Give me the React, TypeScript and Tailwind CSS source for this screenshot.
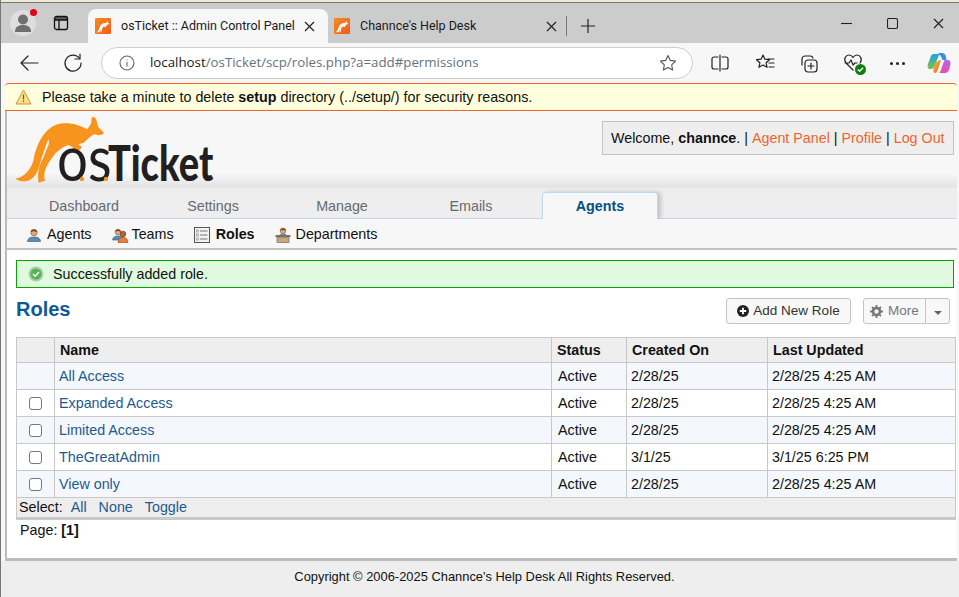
import React from "react";

const Favicon = () => (
  <svg width="16" height="16" viewBox="0 0 16 16" className="shrink-0">
    <defs>
      <linearGradient id="fav" x1="0" y1="0" x2="1" y2="1">
        <stop offset="0" stopColor="#f58d1e" />
        <stop offset="1" stopColor="#f0591f" />
      </linearGradient>
    </defs>
    <rect width="16" height="16" rx="1" fill="url(#fav)" />
    <path d="M1 14.500C3 14 4 11 5 8.500 6 6 8.500 4.500 11 5l1.500-2 .5 1.500 1.500 1.500-2 .5-2 2.500-2-.5-1.500 2.500-.5 3.500-1-.5.5-2.500-1.500 2.500z" fill="#fff" />
  </svg>
);

const X = ({ size = 11 }: { size?: number }) => (
  <svg width={size} height={size} viewBox="0 0 11 11" stroke="#222" strokeWidth="1.2" fill="none" className="shrink-0">
    <path d="M1 1l9 9M10 1l-9 9" />
  </svg>
);

const Kangaroo = () => (
  <svg width="110" height="80" viewBox="0 0 330 240" className="absolute left-[3px] top-0" fill="#f7941e">
    <path d="M15 203C40 200 60 180 70 150C80 90 110 45 150 38C180 33 210 42 232 55L243 38L245 20C250 15 258 18 260 30L265 48L282 65C280 72 268 75 255 70C245 72 232 85 222 95L205 100L216 108L206 120L180 119L190 110L176 102C160 106 145 120 135 128C120 150 100 170 103 203L108 208L86 215C82 190 85 165 100 140L112 110C118 100 118 90 115 85C105 110 92 150 85 175C75 200 60 215 30 210z" />
  </svg>
);

const Logo = () => (
  <div className="relative w-[230px] h-[77px] shrink-0">
    <Kangaroo />
    <svg width="250" height="90" viewBox="0 0 250 90" className="absolute left-0 top-0">
      <text transform="translate(50 70) scale(0.88 1)" fontFamily="Lato, sans-serif" fontWeight="400" fontSize="62" fill="#231f20">os</text>
      <text transform="translate(101 70) scale(0.775 1)" fontFamily="Lato, sans-serif" fontWeight="900" fontSize="49" fill="#231f20">Ticket</text>
      <circle cx="75" cy="68" r="2.2" fill="#f7941e" />
      <circle cx="99" cy="68" r="2.2" fill="#f7941e" />
    </svg>
  </div>
);

const Agent = () => (
  <svg width="16" height="16" viewBox="0 0 16 16" className="shrink-0">
    <path d="M1.500 14.500C2 11 4 10 8 10s6 1 6.500 4.500z" fill="#5b8db3" stroke="#35556e" strokeWidth=".6" />
    <circle cx="8" cy="5.500" r="3.200" fill="#e8a878" stroke="#7a4c2e" strokeWidth=".6" />
    <path d="M4.800 5C5 2 11 2 11.200 5 9 4 7 4 4.800 5z" fill="#6b3f1f" />
  </svg>
);

const Team = () => (
  <svg width="17" height="16" viewBox="0 0 17 16" className="shrink-0">
    <path d="M.5 13C1 10 3 9 6 9s5 1 5.500 4z" fill="#5b8db3" stroke="#35556e" strokeWidth=".6" />
    <circle cx="6" cy="5" r="2.800" fill="#e8a878" stroke="#7a4c2e" strokeWidth=".6" />
    <path d="M3.200 4.500C3.500 2 8.500 2 8.800 4.500 7 3.700 5 3.700 3.200 4.500z" fill="#6b3f1f" />
    <path d="M6 15.500C6.500 11.500 8 10.500 11 10.500s4.500 1 5 5z" fill="#ee7d3b" stroke="#8b4513" strokeWidth=".6" />
    <circle cx="11" cy="7" r="2.800" fill="#a5673f" stroke="#5c3317" strokeWidth=".6" />
  </svg>
);

const RoleIcon = () => (
  <svg width="16" height="16" viewBox="0 0 16 16" className="shrink-0">
    <rect x=".5" y=".5" width="15" height="15" fill="#f2f2f2" stroke="#555" />
    <rect x="2.500" y="3" width="2" height="2" fill="none" stroke="#999" strokeWidth=".7" />
    <rect x="2.500" y="7" width="2" height="2" fill="none" stroke="#999" strokeWidth=".7" />
    <rect x="2.500" y="11" width="2" height="2" fill="none" stroke="#999" strokeWidth=".7" />
    <path d="M6 4h7.500M6 8h7.500M6 12h7.500" stroke="#777" strokeWidth="1.200" />
  </svg>
);

const Dept = () => (
  <svg width="16" height="16" viewBox="0 0 16 16" className="shrink-0">
    <circle cx="8" cy="3.800" r="2.800" fill="#e8a878" stroke="#7a4c2e" strokeWidth=".6" />
    <path d="M5.200 3.500C5.500 1 10.500 1 10.800 3.500 9 2.700 7 2.700 5.200 3.500z" fill="#6b3f1f" />
    <path d="M4 8.500C4.500 7 6 6.700 8 6.700s3.500.3 4 1.800z" fill="#5b8db3" />
    <rect x=".5" y="8" width="15" height="2" fill="#777" />
    <rect x="2" y="10" width="12" height="5.500" fill="#c9a67c" stroke="#6b5a45" strokeWidth=".6" />
  </svg>
);

const ToolIcon = ({ children, className = "" }: { children: React.ReactNode; className?: string }) => (
  <svg width="22" height="22" viewBox="0 0 22 22" fill="none" stroke="#222" strokeWidth="1.200" strokeLinecap="round" strokeLinejoin="round" className={className}>
    {children}
  </svg>
);

const TabBar = () => (
  <div className="h-[40px] bg-[#cccccc] flex items-end shrink-0 relative">
    <div className="w-[87px] h-[40px] flex items-center shrink-0">
      <div className="relative ml-[9px] w-[26px] h-[26px] rounded-full bg-[#dedede] overflow-visible flex items-center justify-center shrink-0">
        <svg width="22" height="22" viewBox="0 0 22 22" fill="#6f6f6f">
          <circle cx="11" cy="7.500" r="5" />
          <path d="M3 20c0-5 3-7 8-7s8 2 8 7z" />
        </svg>
        <span className="absolute right-[-1px] top-[-1px] w-[7px] h-[7px] rounded-full bg-[#e2001a]"></span>
      </div>
      <svg width="16" height="16" viewBox="0 0 16 16" fill="none" stroke="#111" strokeWidth="1.300" className="ml-[17px]">
        <rect x="1.500" y="1.500" width="13" height="13" rx="2" />
        <path d="M1.500 5h13M6 5v9.500" />
        <path d="M2 2h12v3H2z" fill="#111" stroke="none" opacity=".6" />
      </svg>
    </div>
    <div className="w-[240px] h-[34px] bg-[#f7f7f7] rounded-t-[8px] flex items-center pl-[7px] pr-[13px] shrink-0">
      <Favicon />
      <span className="ml-[10px] text-[12.5px] text-[#1a1a1a] flex-1 whitespace-nowrap">osTicket :: Admin Control Panel</span>
      <X />
    </div>
    <div className="w-[238px] h-[34px] flex items-center pl-[6px] pr-[9px] shrink-0">
      <Favicon />
      <span className="ml-[10px] text-[12.5px] text-[#1a1a1a] flex-1 whitespace-nowrap">Channce's Help Desk</span>
      <X />
    </div>
    <div className="w-px h-[20px] bg-[#777] mb-[7px] shrink-0"></div>
    <div className="ml-[14px] mb-[10px] shrink-0">
      <svg width="14" height="14" viewBox="0 0 14 14" stroke="#222" strokeWidth="1.200"><path d="M7 0v14M0 7h14" /></svg>
    </div>
    <div className="ml-auto h-full flex items-center pr-[15px] gap-[35px]">
      <svg width="11" height="11" viewBox="0 0 11 11" stroke="#222" strokeWidth="1.100"><path d="M0 5.500h11" /></svg>
      <svg width="11" height="11" viewBox="0 0 11 11" stroke="#222" strokeWidth="1.100" fill="none"><rect x=".5" y=".5" width="10" height="10" rx="1.500" /></svg>
      <X />
    </div>
  </div>
);

const Toolbar = () => (
  <div className="h-[40px] bg-[#f7f7f7] flex items-center shrink-0 pl-[17px]">
    <ToolIcon>
      <path d="M20 11H3M10 4l-7 7 7 7" />
    </ToolIcon>
    <ToolIcon className="ml-[22px]">
      <path d="M17.500 6.500A8 8 0 1 0 19 11" />
      <path d="M18 2v5h-5" />
    </ToolIcon>
    <div className="ml-[17px] w-[592px] h-[32px] bg-white border border-[#cfcfcf] rounded-full flex items-center pl-[17px] pr-[15px]">
      <svg width="16" height="16" viewBox="0 0 16 16" fill="none" stroke="#666" strokeWidth="1.100" className="shrink-0">
        <circle cx="8" cy="8" r="7" />
        <path d="M8 7v4.500M8 4.500v1" />
      </svg>
      <span className="ml-[15px] text-[13.3px] whitespace-nowrap flex-1 text-[#66727f]">
        <span className="text-[#1a1a1a]">localhost</span>/osTicket/scp/roles.php?a=add#permissions
      </span>
      <svg width="18" height="18" viewBox="0 0 18 18" fill="none" stroke="#555" strokeWidth="1.100" strokeLinejoin="round" className="shrink-0">
        <path d="M9 1.500l2.300 4.900 5.200.7-3.800 3.700.9 5.300L9 13.500l-4.600 2.600.9-5.300L1.500 7.100l5.200-.7z" />
      </svg>
    </div>
    <div className="flex items-center ml-[16px]">
      <ToolIcon>
        <path d="M9 5H5a2 2 0 0 0-2 2v8a2 2 0 0 0 2 2h4M13 5h4a2 2 0 0 1 2 2v8a2 2 0 0 1-2 2h-4M11 3v16" />
      </ToolIcon>
      <ToolIcon className="ml-[23px]">
        <path d="M9 3l1.900 4.200 4.600.5-3.400 3.100 1 4.500L9 13l-4.100 2.300 1-4.500-3.400-3.100 4.600-.5zM14 7h6M15 11h5M15 15h5" />
      </ToolIcon>
      <ToolIcon className="ml-[21px]">
        <path d="M5 13V7a3 3 0 0 1 3-3h5a3 3 0 0 1 3 2" />
        <rect x="8" y="8" width="12" height="12" rx="3" />
        <path d="M14 11v6M11 14h6" />
      </ToolIcon>
      <div className="relative ml-[23px] w-[22px] h-[22px]">
        <ToolIcon>
          <path d="M11 18L4 11C1 7 4 3 7 3c2 0 3.200 1 4 2.500C12 4 13 3 15 3c3 0 6 4 3 8M3 11h4l2-3 2 5 2-2h2" />
        </ToolIcon>
        <span className="absolute right-[-2px] bottom-[-1px] w-[11px] h-[11px] rounded-full bg-[#107c10] flex items-center justify-center">
          <svg width="7" height="7" viewBox="0 0 8 8" fill="none" stroke="#fff" strokeWidth="1.500"><path d="M1 4l2 2 4-4" /></svg>
        </span>
      </div>
      <div className="ml-[24px] flex gap-[3px] w-[18px] justify-center">
        <span className="w-[3px] h-[3px] rounded-full bg-[#222]"></span>
        <span className="w-[3px] h-[3px] rounded-full bg-[#222]"></span>
        <span className="w-[3px] h-[3px] rounded-full bg-[#222]"></span>
      </div>
      <svg width="24" height="22" viewBox="0 0 24 22" className="ml-[21px]">
        <defs>
          <linearGradient id="co1" x1="0" y1="0" x2="0" y2="1"><stop offset="0" stopColor="#1ba4e8" /><stop offset="1" stopColor="#7fc241" /></linearGradient>
          <linearGradient id="co2" x1="0" y1="0" x2="0" y2="1"><stop offset="0" stopColor="#b169e8" /><stop offset="1" stopColor="#e84fa5" /></linearGradient>
          <linearGradient id="co3" x1="0" y1="0" x2="1" y2="1"><stop offset="0" stopColor="#f7c32e" /><stop offset="1" stopColor="#f0543c" /></linearGradient>
        </defs>
        <path d="M7 2h8l-3 1-4 10c-1 3-2 4-4 4H3C1 17 0 15 1 12L4 4c.5-1.300 1.500-2 3-2z" fill="url(#co1)" />
        <path d="M12 21h6c2 0 3-1 4-3l1.500-6c.5-3-1-4-3-4h-3l-3 8c-.5 2-1.500 5-2.500 5z" fill="url(#co2)" />
        <path d="M8 12c2-3 4-4 6-4l-3 9c-.5 2-1.500 4-3 4-1.500 0-2-2-1.500-4z" fill="url(#co3)" />
        <path d="M11 1h4c2 0 3.500 1 4 4l.5 3h-4c-1.500-4-3-6-4.500-7z" fill="#3d8ce8" />
      </svg>
    </div>
  </div>
);

const TABS = ["Dashboard", "Settings", "Manage", "Emails", "Agents"];

const MainNav = () => (
  <div className="h-[31px] bg-[#eeeeee] border-b border-[#c0d9ee] flex items-end pl-[19px] shrink-0">
    {TABS.map((t) =>
      t === "Agents" ? (
        <div key={t} className="w-[116px] h-[27px] mr-[13px] mb-[-1px] bg-[#f7f7f7] border border-b-0 border-[#c0d9ee] rounded-t-[4px] shadow-[3px_0_4px_rgba(0,0,0,0.18)] flex items-center justify-center font-bold text-[#0a4f86]">
          {t}
        </div>
      ) : (
        <div key={t} className="w-[116px] h-[27px] mr-[13px] pt-[4px] flex items-center justify-center text-[#666a70]">
          {t}
        </div>
      )
    )}
  </div>
);

const SubNav = () => (
  <div className="h-[31px] bg-[#f7f7f7] border-b-2 border-[#c2c2c2] flex items-center pl-[19px] pt-[2px] shrink-0 text-[#111]">
    <Agent />
    <span className="ml-[5px]">Agents</span>
    <span className="ml-[20px]"><Team /></span>
    <span className="ml-[3px]">Teams</span>
    <span className="ml-[20px]"><RoleIcon /></span>
    <span className="ml-[6px] font-bold">Roles</span>
    <span className="ml-[20px]"><Dept /></span>
    <span className="ml-[5px]">Departments</span>
  </div>
);

const ROWS = [
  { n: "All Access", c: "2/28/25", u: "2/28/25 4:25 AM", box: false },
  { n: "Expanded Access", c: "2/28/25", u: "2/28/25 4:25 AM", box: true },
  { n: "Limited Access", c: "2/28/25", u: "2/28/25 4:25 AM", box: true },
  { n: "TheGreatAdmin", c: "3/1/25", u: "3/1/25 6:25 PM", box: true },
  { n: "View only", c: "2/28/25", u: "2/28/25 4:25 AM", box: true },
];

const RolesTable = () => (
  <table className="w-[939px] table-fixed border-collapse text-[#111]">
    <colgroup>
      <col className="w-[38px]" />
      <col className="w-[497px]" />
      <col className="w-[75px]" />
      <col className="w-[141px]" />
      <col className="w-[188px]" />
    </colgroup>
    <thead>
      <tr className="h-[25px] bg-[#eeeeee] font-bold">
        <th className="border border-[#c8c8c8]"></th>
        <th className="border border-[#c8c8c8] text-left pl-[5px] font-bold">Name</th>
        <th className="border border-[#c8c8c8] text-left pl-[5px] font-bold">Status</th>
        <th className="border border-[#c8c8c8] text-left pl-[5px] font-bold">Created On</th>
        <th className="border border-[#c8c8c8] text-left pl-[5px] font-bold">Last Updated</th>
      </tr>
    </thead>
    <tbody>
      {ROWS.map((r, i) => (
        <tr key={r.n} className={i % 2 === 0 ? "h-[27px] bg-[#f4f7fc]" : "h-[27px] bg-white"}>
          <td className="border border-[#c8c8c8] text-center">
            {r.box && (
              <span className="inline-block w-[13px] h-[13px] border border-[#767676] rounded-[3px] bg-white align-middle"></span>
            )}
          </td>
          <td className="border border-[#c8c8c8] pl-[4px] text-[#1d5a8f]">{r.n}</td>
          <td className="border border-[#c8c8c8] pl-[6px]">Active</td>
          <td className="border border-[#c8c8c8] pl-[4px]">{r.c}</td>
          <td className="border border-[#c8c8c8] pl-[4px]">{r.u}</td>
        </tr>
      ))}
      <tr className="h-[21px] bg-[#eeeeee]">
        <td colSpan={5} className="border border-[#c8c8c8] border-b-[3px] pl-[2px]">
          Select:<span className="ml-[8px] text-[#1d5a8f]">All</span>
          <span className="ml-[12px] text-[#1d5a8f]">None</span>
          <span className="ml-[12px] text-[#1d5a8f]">Toggle</span>
        </td>
      </tr>
    </tbody>
  </table>
);

export default function App() {
  return (
    <div className="w-[959px] h-[597px] overflow-hidden flex flex-col bg-[#eeeeee] font-['Liberation_Sans',Arial,sans-serif] text-[14.3px] leading-none border-l border-[#777]">
      <div className="h-[3px] bg-[#f0e8d8] border-b border-[#777] shrink-0"></div>
      <div className="font-['Roboto','Open_Sans',sans-serif]">
        <TabBar />
      </div>
      <div className="font-['Open_Sans','Noto_Sans',sans-serif]">
        <Toolbar />
      </div>
      <div className="flex-1 flex flex-col pl-[4px] pr-[2px] bg-[#f7f7f7] min-h-0">
        <div className="h-[28px] bg-[#ffffdd] border-y border-[#f26522] rounded-t-[4px] flex items-center pl-[10px] shrink-0 text-[#111]">
          <svg width="17" height="16" viewBox="0 0 17 16" className="shrink-0">
            <path d="M8.500 1L16 15H1z" fill="#fce08a" stroke="#c79a3a" strokeWidth="1" strokeLinejoin="round" />
            <path d="M8.500 5.500v5M8.500 11.500v1.500" stroke="#7a5a1a" strokeWidth="1.200" />
          </svg>
          <span className="ml-[10px]">Please take a minute to delete <b>setup</b> directory (../setup/) for security reasons.</span>
        </div>
        <div className="flex-1 flex flex-col border-l-2 border-[#bbbbbb] min-h-0 bg-white">
          <div className="h-[77px] bg-gradient-to-b from-[#f7f7f7] from-80% to-[#e3e3e3] flex justify-between shrink-0 pr-[3px]">
            <Logo />
            <div className="mt-[10px] h-[34px] w-[352px] bg-[#eeeeee] border border-[#c4c4c4] flex items-center pl-[8px] text-[#111] whitespace-nowrap">
              Welcome,&nbsp;<b>channce</b>. |&nbsp;<span className="text-[#f0642c]">Agent Panel</span>&nbsp;|&nbsp;<span className="text-[#f0642c]">Profile</span>&nbsp;|&nbsp;<span className="text-[#f0642c]">Log Out</span>
            </div>
          </div>
          <MainNav />
          <SubNav />
          <div className="flex-1 flex flex-col pl-[9px] pt-[10px] border-b-[3px] border-[#bbbbbb] min-h-0">
            <div className="w-[938px] h-[28px] bg-[#e0fadf] border border-[#00a800] flex items-center pl-[11px] shrink-0 text-[#111]">
              <svg width="16" height="16" viewBox="0 0 16 16" className="shrink-0">
                <circle cx="8" cy="8" r="7.500" fill="#a8cfa8" />
                <circle cx="8" cy="8" r="5.500" fill="#55b355" />
                <path d="M5 8l2.200 2.200L11 6" fill="none" stroke="#fff" strokeWidth="1.600" />
              </svg>
              <span className="ml-[9px]">Successfully added role.</span>
            </div>
            <div className="w-[934px] h-[49px] flex items-center justify-between shrink-0">
              <h2 className="text-[20px] font-bold text-[#0e5a96] mb-[7px]">Roles</h2>
              <div className="flex gap-[12px] mt-[-3px] text-[13.5px]">
                <div className="w-[125px] h-[26px] border border-[#c4c4c4] rounded-[3px] bg-[#f8f8f8] flex items-center justify-center text-[#333]">
                  <svg width="12" height="12" viewBox="0 0 12 12" className="mr-[4px]">
                    <circle cx="6" cy="6" r="6" fill="#222" />
                    <path d="M6 2.800v6.400M2.800 6h6.400" stroke="#fff" strokeWidth="1.800" />
                  </svg>
                  Add New Role
                </div>
                <div className="w-[87px] h-[26px] border border-[#c4c4c4] rounded-[3px] bg-[#f8f8f8] flex items-center text-[#777]">
                  <div className="flex-1 flex items-center justify-center border-r border-[#c4c4c4] h-full">
                    <svg width="13" height="13" viewBox="0 0 13 13" className="mr-[5px]">
                      <circle cx="6.500" cy="6.500" r="3.500" fill="none" stroke="#777" strokeWidth="2.600" />
                      <path d="M6.500 0v13M0 6.500h13M2 2l9 9M11 2l-9 9" stroke="#777" strokeWidth="1.800" strokeDasharray="2 9 2" />
                    </svg>
                    More
                  </div>
                  <div className="w-[23px] flex justify-center">
                    <span className="mt-[3px] w-0 h-0 border-x-[4.500px] border-x-transparent border-t-[4.500px] border-t-[#666]"></span>
                  </div>
                </div>
              </div>
            </div>
            <RolesTable />
            <div className="pl-[4px] pt-[3px] text-[#111]">
              Page: <b>[1]</b>
            </div>
          </div>
        </div>
      </div>
      <div className="h-[36px] bg-[#eeeeee] flex items-center justify-center shrink-0 text-[12.9px] text-[#111] pl-[9px] pb-[4px]">
        Copyright © 2006-2025 Channce's Help Desk All Rights Reserved.
      </div>
    </div>
  );
}
